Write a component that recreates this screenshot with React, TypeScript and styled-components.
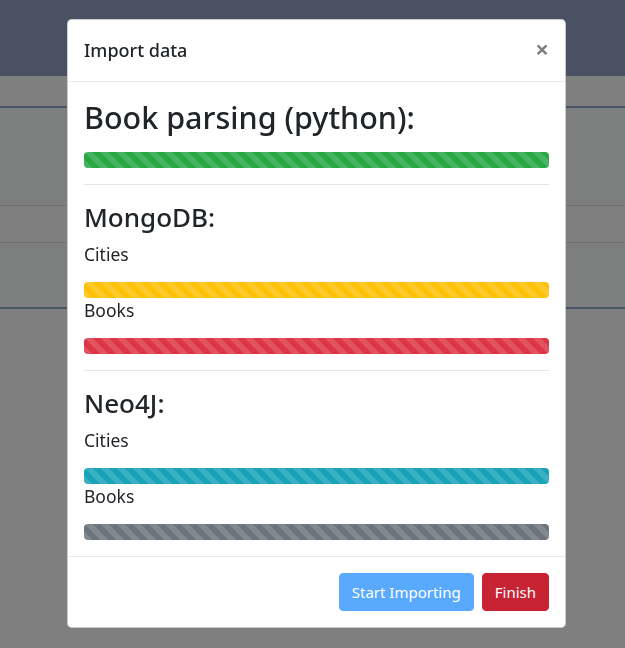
import React from 'react';
import styled, {createGlobalStyle} from 'styled-components';

const GlobalStyle = createGlobalStyle`
  html, body {
    margin: 0;
    padding: 0;
    height: 100%;
  }
  body {
    font-family: "Noto Sans", "Open Sans", sans-serif;
    font-size: 16px;
    line-height: 1.5;
    color: #212529;
    background: #fff;
    overflow: hidden;
  }
`;

// page that sits under the backdrop
const Page = styled.div`
  height: 648px;
  display: flex;
  flex-direction: column;
`;

const Navbar = styled.div`
  height: 76px;
  background-color: #93a2c4;
`;

const Toolbar = styled.div`
  height: 30px;
  background-color: #ffffff;
  border-bottom: 2px solid #97a7c8;
`;

const Row = styled.div<{ $h: number; $stripe?: boolean; $thick?: boolean }>`
  height: ${p => p.$h}px;
  background-color: ${p => (p.$stripe ? '#f9fefc' : '#ffffff')};
  border-bottom: ${p => (p.$thick ? '2px solid #97a7c8' : '1px solid #dcdcdc')};
`;

const Backdrop = styled.div`
  position: fixed;
  inset: 0;
  background-color: rgba(0, 0, 0, 0.5);
`;

const Dialog = styled.div`
  position: fixed;
  top: 19px;
  left: 67px;
  width: 499px;
  box-sizing: border-box;
  background: #fff;
  border: 1px solid rgba(0, 0, 0, 0.2);
  border-radius: 4.8px;
  display: flex;
  flex-direction: column;
`;

const Header = styled.div`
  display: flex;
  align-items: flex-start;
  justify-content: space-between;
  padding: 16px;
  border-bottom: 1px solid #e9ecef;
`;

const Title = styled.h5`
  margin: 0;
  font-size: 18px;
  font-weight: 500;
  line-height: 29px;
`;

const Close = styled.button`
  padding: 17px 16px 15px;
  margin: -16px -16px -16px auto;
  background: transparent;
  border: 0;
  font-family: inherit;
  font-size: 24px;
  font-weight: 700;
  line-height: 1;
  color: #000;
  opacity: 0.5;
  text-shadow: 0 1px 0 #fff;
  cursor: pointer;
`;

const Body = styled.div`
  padding: 16px;
`;

const BigHeading = styled.h2`
  margin: 0 0 16px;
  font-size: 30.5px;
  font-weight: 500;
  line-height: 38px;
`;

const Heading = styled.h3`
  margin: 0 0 8px;
  font-size: 26px;
  font-weight: 500;
  line-height: 33px;
`;

const Label = styled.p`
  margin: 0 0 16px;
  font-size: 17.5px;
  line-height: 24px;
`;

const Rule = styled.hr`
  margin: 16px 0;
  border: 0;
  border-top: 1px solid rgba(0, 0, 0, 0.1);
`;

const Progress = styled.div`
  display: flex;
  height: 16px;
  overflow: hidden;
  background-color: #e9ecef;
  border-radius: 4px;
`;

const Bar = styled.div<{ $color: string }>`
  background-color: ${p => p.$color};
  background-image: linear-gradient(
    45deg,
    rgba(255, 255, 255, 0.15) 25%,
    transparent 25%,
    transparent 50%,
    rgba(255, 255, 255, 0.15) 50%,
    rgba(255, 255, 255, 0.15) 75%,
    transparent 75%,
    transparent
  );
  background-size: 16px 16px;
`;

const Footer = styled.div`
  display: flex;
  justify-content: flex-end;
  align-items: center;
  gap: 8px;
  padding: 16px;
  border-top: 1px solid #e9ecef;
`;

const Button = styled.button<{ $variant: 'primary' | 'danger'; disabled?: boolean }>`
  font-family: inherit;
  font-size: 15px;
  line-height: 24px;
  padding: 6px 12px;
  border-radius: 4px;
  border: 1px solid ${p => (p.$variant === 'primary' ? '#007bff' : '#c82333')};
  background-color: ${p => (p.$variant === 'primary' ? '#007bff' : '#c82333')};
  color: #fff;
  opacity: ${p => (p.disabled ? 0.65 : 1)};
`;

const ProgressBar: React.FC<{ color: string; value?: number }> = ({color, value = 100}) => (
  <Progress>
    <Bar $color={color} style={{width: `${value}%`}} />
  </Progress>
);

export default function App() {
  return (
    <>
      <GlobalStyle />
      <Page>
        <Navbar />
        <Toolbar />
        <Row $h={97} $stripe />
        <Row $h={36} />
        <Row $h={64} $stripe $thick />
      </Page>
      <Backdrop />
      <Dialog>
        <Header>
          <Title>Import data</Title>
          <Close aria-label="Close">×</Close>
        </Header>
        <Body>
          <BigHeading>Book parsing (python):</BigHeading>
          <ProgressBar color="#28a745" />
          <Rule />
          <Heading>MongoDB:</Heading>
          <Label>Cities</Label>
          <ProgressBar color="#ffc107" />
          <Label>Books</Label>
          <ProgressBar color="#dc3545" />
          <Rule />
          <Heading>Neo4J:</Heading>
          <Label>Cities</Label>
          <ProgressBar color="#17a2b8" />
          <Label>Books</Label>
          <ProgressBar color="#6c757d" />
        </Body>
        <Footer>
          <Button $variant="primary" disabled>Start Importing</Button>
          <Button $variant="danger">Finish</Button>
        </Footer>
      </Dialog>
    </>
  );
}
